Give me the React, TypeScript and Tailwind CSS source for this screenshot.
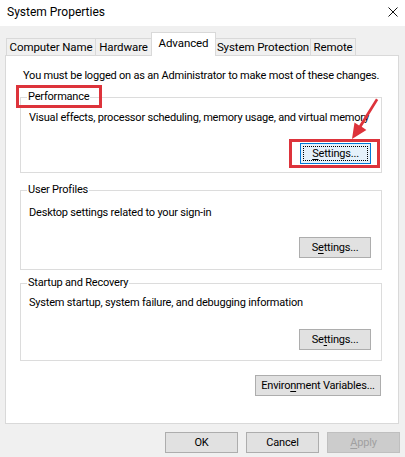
import React from 'react';

// Win10 style "System Properties" dialog, Advanced tab

const TABS = [
  { name: 'Computer Name', w: 'w-[90px]' },
  { name: 'Hardware', w: 'w-[57px]' },
  { name: 'Advanced', w: 'w-[65px]', active: true },
  { name: 'System Protection', w: 'w-[96px]' },
  { name: 'Remote', w: 'w-[46px]' },
];

function WinButton({
  children,
  className = '',
  focused = false,
  disabled = false,
}: {
  children: React.ReactNode;
  className?: string;
  focused?: boolean;
  disabled?: boolean;
}) {
  if (focused) {
    return (
      <button className={`relative h-[21px] whitespace-nowrap border border-[#0078d7] bg-[#e5f1fb] leading-[19px] text-black ${className}`}>
        <span className="absolute inset-[2px] border border-dotted border-black" />
        {children}
      </button>
    );
  }
  return (
    <button
      className={`h-[21px] whitespace-nowrap border leading-[19px] ${
        disabled ? 'border-[#bfbfbf] bg-[#cccccc] text-[#a0a0a0]' : 'border-[#adadad] bg-[#e1e1e1] text-black'
      } ${className}`}
    >
      {children}
    </button>
  );
}

export default function App() {
  return (
    <div className="w-[405px] h-[457px] overflow-hidden bg-[#f0f0f0] text-black font-['Roboto','Liberation_Sans',Arial,sans-serif] text-[11px] tracking-[-0.2px]">
      {/* Title bar */}
      <div className="h-[26px] bg-white flex items-center justify-between pl-[7px] pr-[7px]">
        <span className="text-[12px] tracking-normal leading-[16px] -mt-[2px]">System Properties</span>
        <svg width="10" height="10" viewBox="0 0 10 10" className="-mt-[3px]">
          <path d="M0.5 0.5 L9.5 9.5 M9.5 0.5 L0.5 9.5" stroke="#111" strokeWidth="1" />
        </svg>
      </div>

      {/* Tabs */}
      <div className="h-[29px] flex items-end pl-[6px] text-[11.5px] tracking-[-0.1px]">
        {TABS.map((t, i) => (
          <div
            key={t.name}
            className={`${t.w} ${i > 0 ? '-ml-px' : ''} border border-b-0 border-[#d9d9d9] flex justify-center whitespace-nowrap ${
              t.active
                ? 'relative z-10 h-[24px] -mb-px bg-white items-start pt-[3px]'
                : 'h-[17px] items-center'
            }`}
          >
            <span className="leading-[14px]">{t.name}</span>
          </div>
        ))}
      </div>

      {/* Panel */}
      <div className="relative mx-[5px] w-[394px] h-[369px] border border-[#d9d9d9] bg-white">
        <div className="pl-[17px] pt-[12px] leading-[15px] whitespace-nowrap">
          You must be logged on as an Administrator to make most of these changes.
        </div>

        {/* Performance */}
        <fieldset className="ml-[14px] mt-[7px] w-[362px] min-w-0 border border-[#dcdcdc] pl-[8px] pr-[10px] pt-[6px] pb-[8px]">
          <legend className="-ml-[2px] px-[1px] leading-[14px]">
            <span className="relative">
              Performance
              <span className="absolute -left-[12px] -top-[5px] w-[86px] h-[23px] border-[3px] border-[#dd333b]" />
            </span>
          </legend>
          <div className="leading-[15px] whitespace-nowrap overflow-hidden">
            Visual effects, processor scheduling, memory usage, and virtual memory
          </div>
          <div className="flex justify-end mt-[18px]">
            <div className="relative">
              <WinButton focused className="w-[71px]">
                <span className="underline underline-offset-2">S</span>ettings...
              </WinButton>
              <span className="absolute -left-[11px] -top-[4px] w-[91px] h-[29px] border-[3px] border-[#dd333b]" />
            </div>
          </div>
        </fieldset>

        {/* User Profiles */}
        <fieldset className="ml-[14px] mt-[10px] w-[362px] min-w-0 border border-[#dcdcdc] pl-[8px] pr-[10px] pt-[8px] pb-[11px]">
          <legend className="-ml-[2px] px-[1px] leading-[14px]">User Profiles</legend>
          <div className="leading-[15px]">Desktop settings related to your sign-in</div>
          <div className="flex justify-end mt-[17px]">
            <WinButton className="w-[72px]">
              S<span className="underline underline-offset-2">e</span>ttings...
            </WinButton>
          </div>
        </fieldset>

        {/* Startup and Recovery */}
        <fieldset className="ml-[14px] mt-[6px] w-[362px] min-w-0 border border-[#dcdcdc] pl-[8px] pr-[10px] pt-[5px] pb-[10px]">
          <legend className="-ml-[2px] px-[1px] leading-[14px]">Startup and Recovery</legend>
          <div className="leading-[15px]">System startup, system failure, and debugging information</div>
          <div className="flex justify-end mt-[19px]">
            <WinButton className="w-[72px]">
              Se<span className="underline underline-offset-2">t</span>tings...
            </WinButton>
          </div>
        </fieldset>

        <div className="flex justify-end mt-[14px] pr-[17px]">
          <WinButton className="w-[126px]">
            Enviro<span className="underline underline-offset-2">n</span>ment Variables...
          </WinButton>
        </div>

        {/* red annotation arrow */}
        <svg className="absolute left-[338px] top-[38px]" width="44" height="52" viewBox="0 0 44 52">
          <polygon
            points="34.2,6 17.7,32.8 22.4,35.9 8,45 10.5,28.4 15.1,31.4 32,4.6"
            fill="#dd333b"
          />
        </svg>
      </div>

      {/* Dialog buttons */}
      <div className="flex justify-end gap-[8px] pr-[5px] mt-[8px]">
        <WinButton className="w-[73px]">OK</WinButton>
        <WinButton className="w-[73px]">Cancel</WinButton>
        <WinButton disabled className="w-[73px]">
          <span className="underline underline-offset-2">A</span>pply
        </WinButton>
      </div>
    </div>
  );
}
